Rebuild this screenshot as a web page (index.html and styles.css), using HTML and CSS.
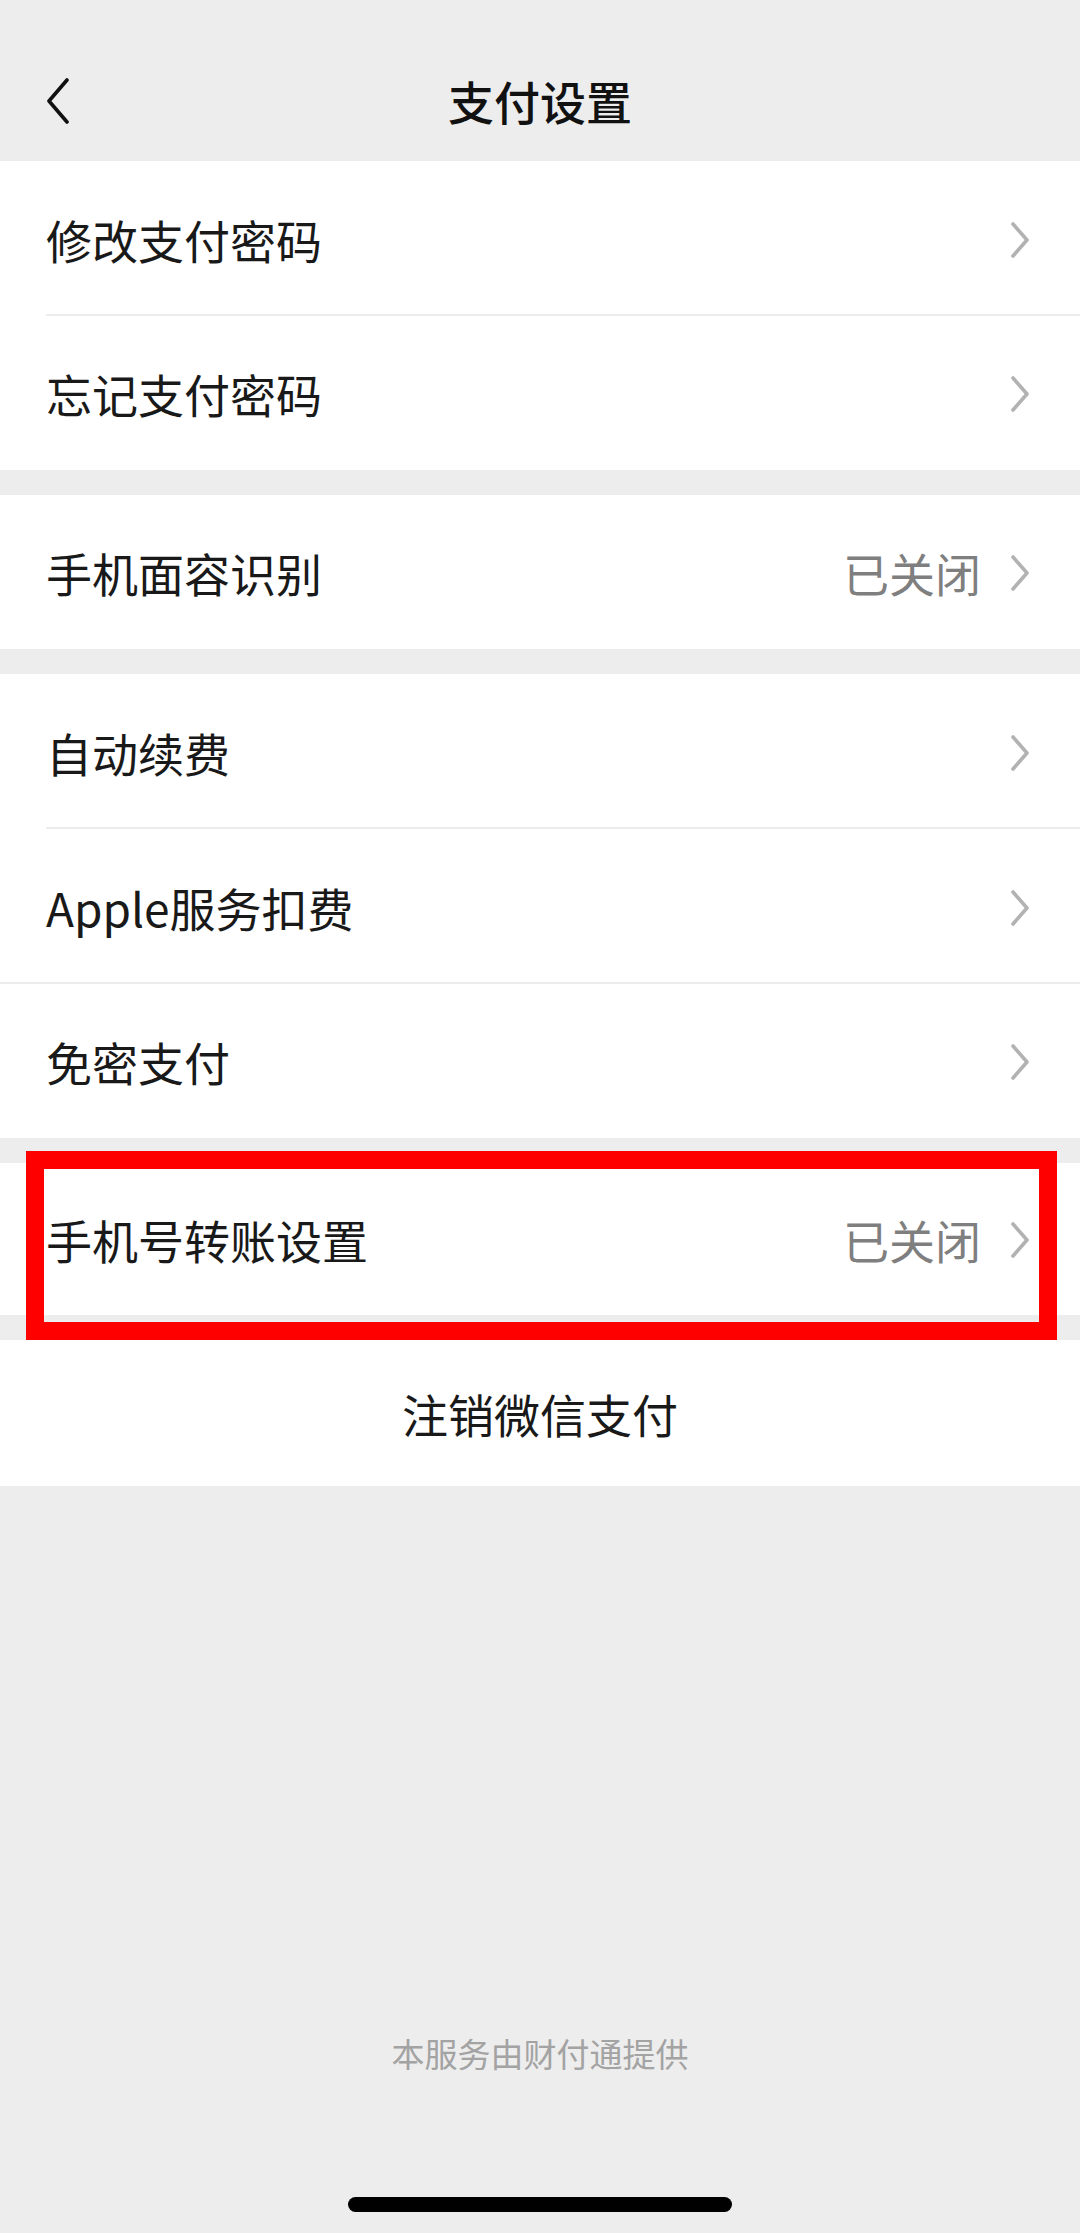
FILE: index.html
```html
<!DOCTYPE html>
<html lang="zh-CN">
<head>
<meta charset="utf-8">
<title>支付设置</title>
<link rel="stylesheet" href="styles.css">
</head>
<body>
<div class="screen">
  <header class="nav">
    <div class="nav-bar">
      <svg class="back" viewBox="0 0 24 46" width="24" height="46" aria-hidden="true">
        <polyline points="21,2 3,23 21,44" fill="none" stroke="#111" stroke-width="3.6" stroke-linecap="round" stroke-linejoin="round"/>
      </svg>
      <div class="nav-title">支付设置</div>
    </div>
  </header>

  <section class="group first">
    <div class="row divided">
      <span class="label">修改支付密码</span>
      <svg class="chev" viewBox="0 0 20 36" width="20" height="36" aria-hidden="true"><polyline points="3,2 17,18 3,34" fill="none" stroke="#b2b2b2" stroke-width="3.6" stroke-linecap="round" stroke-linejoin="round"/></svg>
    </div>
    <div class="row">
      <span class="label">忘记支付密码</span>
      <svg class="chev" viewBox="0 0 20 36" width="20" height="36" aria-hidden="true"><polyline points="3,2 17,18 3,34" fill="none" stroke="#b2b2b2" stroke-width="3.6" stroke-linecap="round" stroke-linejoin="round"/></svg>
    </div>
  </section>

  <section class="group">
    <div class="row">
      <span class="label">手机面容识别</span>
      <span class="value">已关闭</span>
      <svg class="chev" viewBox="0 0 20 36" width="20" height="36" aria-hidden="true"><polyline points="3,2 17,18 3,34" fill="none" stroke="#b2b2b2" stroke-width="3.6" stroke-linecap="round" stroke-linejoin="round"/></svg>
    </div>
  </section>

  <section class="group">
    <div class="row divided">
      <span class="label">自动续费</span>
      <svg class="chev" viewBox="0 0 20 36" width="20" height="36" aria-hidden="true"><polyline points="3,2 17,18 3,34" fill="none" stroke="#b2b2b2" stroke-width="3.6" stroke-linecap="round" stroke-linejoin="round"/></svg>
    </div>
    <div class="row divided full">
      <span class="label">Apple服务扣费</span>
      <svg class="chev" viewBox="0 0 20 36" width="20" height="36" aria-hidden="true"><polyline points="3,2 17,18 3,34" fill="none" stroke="#b2b2b2" stroke-width="3.6" stroke-linecap="round" stroke-linejoin="round"/></svg>
    </div>
    <div class="row">
      <span class="label">免密支付</span>
      <svg class="chev" viewBox="0 0 20 36" width="20" height="36" aria-hidden="true"><polyline points="3,2 17,18 3,34" fill="none" stroke="#b2b2b2" stroke-width="3.6" stroke-linecap="round" stroke-linejoin="round"/></svg>
    </div>
  </section>

  <section class="group highlighted">
    <div class="row short">
      <span class="label">手机号转账设置</span>
      <span class="value">已关闭</span>
      <svg class="chev" viewBox="0 0 20 36" width="20" height="36" aria-hidden="true"><polyline points="3,2 17,18 3,34" fill="none" stroke="#b2b2b2" stroke-width="3.6" stroke-linecap="round" stroke-linejoin="round"/></svg>
    </div>
    <div class="mark"></div>
  </section>

  <section class="group">
    <div class="row action">注销微信支付</div>
  </section>

  <footer class="footer">
    <div class="provider">本服务由财付通提供</div>
    <div class="home-indicator"></div>
  </footer>
</div>
</body>
</html>
```

FILE: styles.css
```css
html, body {
  margin: 0;
  padding: 0;
  background: #ededed;
}

body {
  font-family: "Noto Sans CJK SC", "Noto Sans", sans-serif;
  color: #191919;
}

.screen {
  width: 1080px;
  min-height: 2233px;
  display: flex;
  flex-direction: column;
  background: #ededed;
}

.nav {
  height: 161px;
  box-sizing: border-box;
  padding-top: 56px;
  background: #ededed;
}

.nav-bar {
  position: relative;
  height: 88px;
  display: flex;
  align-items: center;
  justify-content: center;
}

.back {
  position: absolute;
  left: 46px;
  top: 22px;
}

.nav-title {
  font-size: 46px;
  font-weight: 500;
  color: #111;
}

.group {
  background: #fff;
  margin-top: 25px;
}

.group.first {
  margin-top: 0;
}

.row {
  position: relative;
  height: 154px;
  display: flex;
  align-items: center;
  padding: 0 50px 0 46px;
  box-sizing: border-box;
  font-size: 46px;
}

.row.divided {
  height: 155px;
}

.row.divided::after {
  content: "";
  position: absolute;
  left: 46px;
  right: 0;
  bottom: 0;
  height: 2px;
  background: #ececec;
}

.row.divided.full::after {
  left: 0;
}

.row.short {
  height: 152px;
}

.label {
  flex: 1;
  color: #191919;
  white-space: nowrap;
}

.value {
  color: #7f7f7f;
  margin-right: 29px;
}

.chev {
  flex: none;
  display: block;
  margin-top: 2px;
}

.highlighted {
  position: relative;
}

.mark {
  position: absolute;
  top: -12px;
  left: 26px;
  right: 23px;
  bottom: -25px;
  border: 18px solid #ff0000;
  box-sizing: border-box;
  pointer-events: none;
}

.row.action {
  height: 146px;
  justify-content: center;
  padding: 0;
  color: #191919;
}

.footer {
  margin-top: auto;
  display: flex;
  flex-direction: column;
  align-items: center;
  padding-bottom: 21px;
}

.provider {
  font-size: 33px;
  line-height: 50px;
  color: #a3a3a3;
}

.home-indicator {
  margin-top: 119px;
  width: 384px;
  height: 15px;
  border-radius: 8px;
  background: #000;
}
```
